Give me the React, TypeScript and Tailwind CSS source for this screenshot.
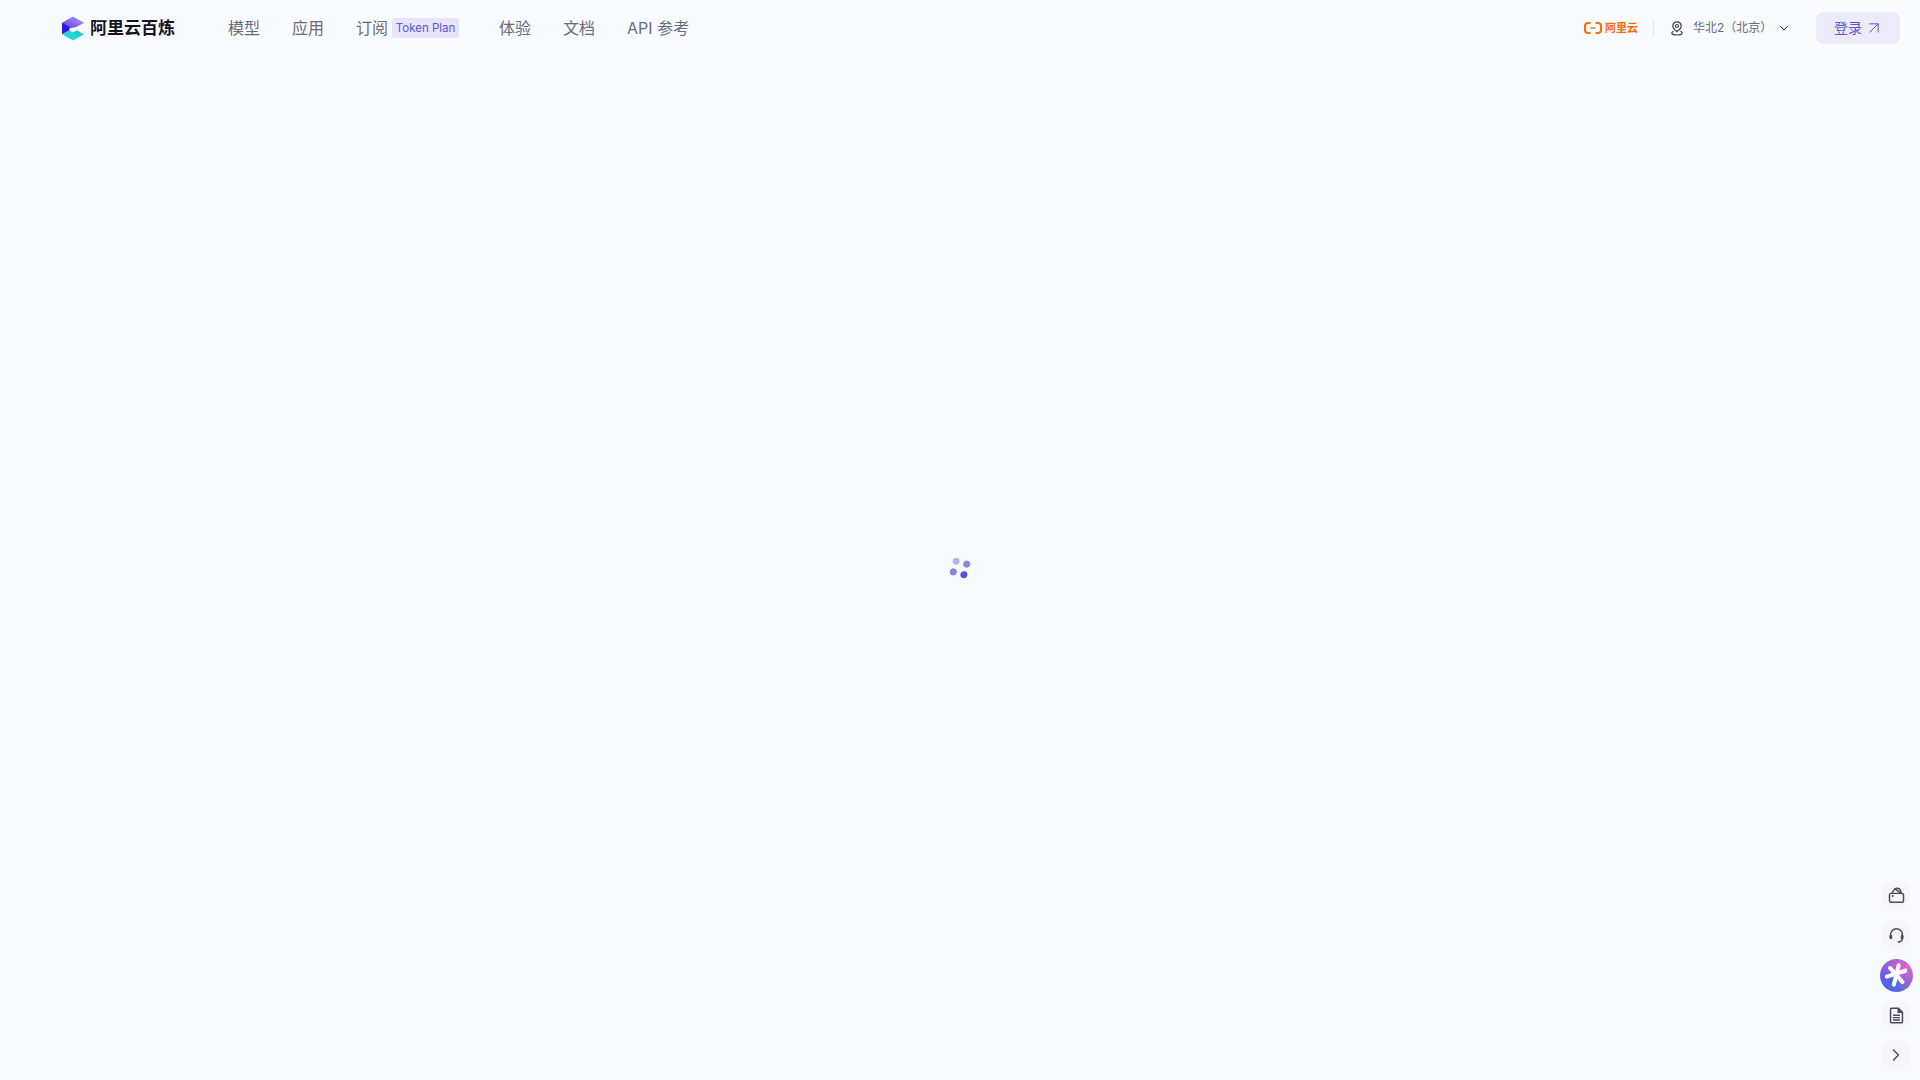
import { ChevronDown, ChevronRight, ArrowUpRight } from 'lucide-react';

const fontStack = "font-['Inter','Noto_Sans_CJK_SC',sans-serif]";

const navItems = [
  { label: '模型' },
  { label: '应用' },
  { label: '订阅', badge: 'Token Plan' },
  { label: '体验' },
  { label: '文档' },
  { label: 'API 参考' },
];

const BailianLogo = () => (
  <svg width="22" height="25" viewBox="0 0 24 26" className="shrink-0">
    <defs>
      <linearGradient id="topFace" x1="1" y1="0" x2="0" y2="1">
        <stop offset="0" stopColor="#b49cf5" />
        <stop offset="1" stopColor="#5a3fe4" />
      </linearGradient>
      <linearGradient id="bottomFace" x1="0" y1="1" x2="1" y2="0">
        <stop offset="0" stopColor="#2fe6cf" />
        <stop offset="1" stopColor="#18c4d8" />
      </linearGradient>
    </defs>
    <path d="M12 0 L24 6.6 L16 11.2 L8 13 L0 6.6 Z" fill="url(#topFace)" />
    <path d="M0 6.6 L8 11 L8 15.2 L0 19.4 Z" fill="#2a1fd8" />
    <path d="M0 19.4 L8 15.2 L12 17.4 L16 14.8 L24 19.4 L12 26 Z" fill="url(#bottomFace)" />
  </svg>
);

const AliyunLogo = () => (
  <div className="flex items-center gap-[3px] text-[#ff6a00]">
    <svg width="18" height="12" viewBox="0 0 18 12" fill="none">
      <path d="M6.5 1 H4 C2.2 1 1 2.2 1 4 V8 C1 9.8 2.2 11 4 11 H6.5" stroke="currentColor" strokeWidth="2" />
      <path d="M11.5 1 H14 C15.8 1 17 2.2 17 4 V8 C17 9.8 15.8 11 14 11 H11.5" stroke="currentColor" strokeWidth="2" />
      <path d="M6.5 6 H11.5" stroke="currentColor" strokeWidth="1.4" />
    </svg>
    <span className="w-[32px] whitespace-nowrap pt-px text-[11px] leading-none font-semibold">阿里云</span>
  </div>
);

const PinIcon = () => (
  <svg width="14" height="15" viewBox="0 0 14 15" fill="none" stroke="#3f3f50" strokeWidth="1.2">
    <path d="M7 10.6 C4.6 8.8 2.8 7.2 2.8 5 A4.2 4.2 0 0 1 11.2 5 C11.2 7.2 9.4 8.8 7 10.6 Z" />
    <circle cx="7" cy="5" r="1.5" />
    <path d="M3.6 10.2 C2.4 10.8 1.8 11.4 1.8 12 C1.8 13.2 4.2 14 7 14 C9.8 14 12.2 13.2 12.2 12 C12.2 11.4 11.6 10.8 10.4 10.2" />
  </svg>
);

const BagIcon = () => (
  <svg width="17" height="17" viewBox="0 0 16 16" fill="none" stroke="#4a4a5c" strokeWidth="1.4">
    <rect x="1.4" y="6" width="13.2" height="8.4" rx="1.4" />
    <path d="M3.4 6 L6.4 1.8 L12.6 6" strokeLinejoin="round" />
    <path d="M6.4 1.8 C8 1 10 1.2 11.2 2.2 L12.6 6" />
    <circle cx="4.4" cy="8.4" r="0.9" fill="#4a4a5c" stroke="none" />
  </svg>
);

const HeadsetIcon = () => (
  <svg width="17" height="17" viewBox="0 0 16 16" fill="none" stroke="#4a4a5c" strokeWidth="1.4">
    <path d="M2.4 9.4 V7.2 A5.6 5.6 0 0 1 13.6 7.2 V10.4 C13.6 12.8 11.8 14.2 9.2 14.2" />
    <rect x="1.4" y="7.6" width="2.6" height="3.8" rx="1" fill="#4a4a5c" stroke="none" />
    <rect x="12" y="7.6" width="2.6" height="3.8" rx="1" fill="#4a4a5c" stroke="none" />
  </svg>
);

const DocIcon = () => (
  <svg width="17" height="17" viewBox="0 0 16 16" fill="none" stroke="#4a4a5c" strokeWidth="1.4">
    <path d="M2.4 2.2 C2.4 1.6 2.9 1.1 3.5 1.1 H9.8 L13.6 4.9 V13.8 C13.6 14.4 13.1 14.9 12.5 14.9 H3.5 C2.9 14.9 2.4 14.4 2.4 13.8 Z" strokeLinejoin="round" />
    <path d="M9.6 1.2 V5 H13.4" fill="#4a4a5c" />
    <path d="M4.8 7.8 H11.2 M4.8 10 H11.2 M4.8 12.2 H11.2" />
  </svg>
);

const AssistantIcon = () => (
  <div className="-m-[1.5px] flex h-[33px] w-[33px] items-center justify-center rounded-full bg-[conic-gradient(from_200deg,#3f6be8,#6a5be6,#b05fd8,#d66ac6,#8f62e0,#3f6be8)]">
    <svg width="26" height="26" viewBox="0 0 24 24" fill="none" stroke="#ffffff" strokeWidth="3.8" strokeLinecap="round">
      <path d="M14.5 3 L10 21" />
      <path d="M3.5 13.5 L20.5 8" />
      <path d="M6.5 5.5 L18 18.5" />
    </svg>
  </div>
);

const SideButton = ({ children }: { children: React.ReactNode }) => (
  <button className="flex h-[30px] w-[30px] items-center justify-center rounded-full bg-[#f5f6fa]">
    {children}
  </button>
);

export default function App() {
  return (
    <div className={`relative flex h-screen flex-col overflow-hidden bg-[#f8fbff] ${fontStack}`}>
      <header className="flex h-14 shrink-0 items-center justify-between pl-[62px] pr-5">
        <div className="flex items-center">
          <div className="flex items-center gap-[6px]">
            <BailianLogo />
            <span className="text-[17px] font-semibold leading-none text-[#14141f]">阿里云百炼</span>
          </div>
          <nav className="ml-[53px] flex items-center gap-8">
            {navItems.map((item) => (
              <div key={item.label} className="flex items-center gap-1">
                <span className="text-[16px] leading-6 text-[#6b6b7b]">{item.label}</span>
                {item.badge && (
                  <span className="mr-[8px] flex h-5 w-[67px] items-center justify-center whitespace-nowrap rounded-[3px] bg-[#e6e5fb] pt-[2px] text-[11.5px] text-[#5c56d6]">
                    {item.badge}
                  </span>
                )}
              </div>
            ))}
          </nav>
        </div>
        <div className="flex items-center">
          <AliyunLogo />
          <div className="mx-4 h-4 w-px bg-[#e4e6ee]" />
          <div className="flex items-center text-[#6b6b7b]">
            <PinIcon />
            <span className="ml-[9px] w-[83px] whitespace-nowrap text-[12px] leading-none">华北2（北京）</span>
            <ChevronDown size={16} strokeWidth={1.5} className="text-[#3f3f50]" />
          </div>
          <button className="ml-6 flex h-8 w-[84px] items-center justify-center gap-[2px] rounded-lg bg-[#ecebfa] pl-[2px] text-[14px] leading-none text-[#5c56d6]">
            登录
            <ArrowUpRight size={20} strokeWidth={1.2} />
          </button>
        </div>
      </header>

      <main className="flex flex-1 items-center justify-center">
        <div className="grid rotate-[15deg] grid-cols-2 gap-[4px]">
          <span className="h-[7px] w-[7px] rounded-full bg-[#b3b0ea]" />
          <span className="h-[7px] w-[7px] rounded-full bg-[#8d89e2]" />
          <span className="h-[7px] w-[7px] rounded-full bg-[#8783dd]" />
          <span className="h-[7px] w-[7px] rounded-full bg-[#5a52d5]" />
        </div>
      </main>

      <aside className="absolute bottom-[10px] right-[9px] flex flex-col items-center gap-[10px]">
        <SideButton>
          <BagIcon />
        </SideButton>
        <SideButton>
          <HeadsetIcon />
        </SideButton>
        <AssistantIcon />
        <SideButton>
          <DocIcon />
        </SideButton>
        <SideButton>
          <ChevronRight size={20} strokeWidth={1.6} className="text-[#4a4a5c]" />
        </SideButton>
      </aside>
    </div>
  );
}
